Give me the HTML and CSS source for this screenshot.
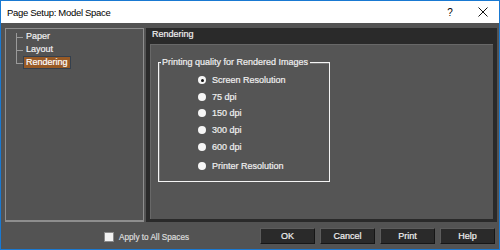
FILE: index.html
```html
<!DOCTYPE html>
<html lang="en">
<head>
  <meta charset="UTF-8" />
  <title>Page Setup: Model Space</title>
  <link rel="stylesheet" href="styles.css">
</head>
<body>
  <div class="window">
    <!-- Title bar -->
    <div class="titlebar">
      <span class="title">Page Setup: Model Space</span>
      <span class="tb-btn">?</span>
      <span class="tb-btn">
        <svg width="10" height="10" viewBox="0 0 10 10">
          <path d="M0.5 0.5 L9.5 9.5 M9.5 0.5 L0.5 9.5" stroke="#111" stroke-width="1" fill="none" />
        </svg>
      </span>
    </div>

    <div class="content">
      <div class="main">
        <!-- Left tree -->
        <div class="tree">
          <div class="tree-list">
            <div class="tree-item"><span>Paper</span></div>
            <div class="tree-item"><span>Layout</span></div>
            <div class="tree-item selected"><span>Rendering</span></div>
          </div>
        </div>

        <!-- Right page -->
        <div class="page">
          <div class="page-head">Rendering</div>
          <div class="page-inner">
            <div class="group">
              <div class="legend">Printing quality for Rendered Images</div>
              <div class="radio checked"><span class="dot"></span>Screen Resolution</div>
              <div class="radio"><span class="dot"></span>75 dpi</div>
              <div class="radio"><span class="dot"></span>150 dpi</div>
              <div class="radio"><span class="dot"></span>300 dpi</div>
              <div class="radio"><span class="dot"></span>600 dpi</div>
              <div class="radio last"><span class="dot"></span>Printer Resolution</div>
            </div>
          </div>
        </div>
      </div>

      <!-- Footer -->
      <div class="footer">
        <label class="check"><span class="box"></span>Apply to All Spaces</label>
        <div class="buttons">
          <button class="btn">OK</button>
          <button class="btn">Cancel</button>
          <button class="btn">Print</button>
          <button class="btn">Help</button>
        </div>
      </div>
    </div>
  </div>
</body>
</html>
```

FILE: styles.css
```css
body {
  margin: 0;
  font-family: "Liberation Sans", Arial, sans-serif;
  font-size: 9px;
  color: #f0f0f0;
}

.window {
  width: 500px;
  height: 250px;
  box-sizing: border-box;
  border: 1px solid #1979d2;
  background: #535353;
  display: flex;
  flex-direction: column;
}

/* Title bar */
.titlebar {
  height: 22px;
  flex: none;
  background: #fff;
  color: #000;
  display: flex;
  align-items: center;
  padding-left: 6px;
  padding-right: 1px;
  font-size: 9.5px;
  letter-spacing: -0.3px;
}

.title {
  flex: 1;
}

.tb-btn {
  width: 30px;
  margin-left: 3px;
  display: flex;
  justify-content: center;
  font-size: 10px;
}

/* Content area */
.content {
  flex: 1;
  display: flex;
  flex-direction: column;
  padding: 5px 2px 0 4px;
  min-height: 0;
  -webkit-text-stroke: 0.2px;
}

.main {
  height: 194px;
  display: flex;
  gap: 2px;
}

/* Tree */
.tree {
  width: 139px;
  box-sizing: border-box;
  border: 1px solid #8e8e8e;
  border-bottom-width: 2px;
  padding: 1px 0 0 0;
}

.tree-list {
  position: relative;
}

.tree-list::before {
  content: '';
  position: absolute;
  left: 10px;
  top: 3px;
  height: 31px;
  border-left: 1px solid #9a9a9a;
}

.tree-item {
  position: relative;
  height: 13px;
  line-height: 13px;
  padding-left: 17px;
}

.tree-item::before {
  content: '';
  position: absolute;
  left: 10px;
  top: 7px;
  width: 7px;
  border-top: 1px solid #9a9a9a;
}

.tree-item span {
  display: inline-block;
  padding: 0 2px;
  line-height: 11px;
  border: 1px solid transparent;
}

.tree-item.selected span {
  background: #985a25;
  border-color: #34404e;
  color: #fff;
}

/* Page */
.page {
  flex: 1;
  background: #2a2a2a;
  padding: 0 4px 3px 4px;
  display: flex;
  flex-direction: column;
}

.page-head {
  height: 16px;
  line-height: 12px;
  padding-left: 2px;
}

.page-inner {
  flex: 1;
  background: #555;
  border-top: 1px solid #686868;
  border-left: 1px solid #686868;
  padding: 17px 0 0 7px;
}

.group {
  position: relative;
  width: 172px;
  height: 120px;
  box-sizing: border-box;
  border: 1px solid #f4f4f4;
  box-shadow: inset 1px 1px 0 #777;
  padding: 9px 0 0 39px;
}

.legend {
  position: absolute;
  top: -6px;
  left: 2px;
  padding: 0 2px 0 1px;
  background: #555;
  line-height: 11px;
}

.radio {
  height: 16.6px;
  display: flex;
  align-items: center;
}

.radio.last {
  margin-top: 3px;
}

.dot {
  width: 8px;
  height: 8px;
  border-radius: 50%;
  background: #f6f6f6;
  margin-right: 6px;
  display: flex;
  align-items: center;
  justify-content: center;
}

.radio.checked .dot::after {
  content: '';
  width: 3px;
  height: 3px;
  border-radius: 50%;
  background: #111;
}

/* Footer */
.footer {
  flex: 1;
  display: flex;
  align-items: flex-start;
  padding-top: 6px;
}

.check {
  display: flex;
  align-items: center;
  margin-left: 99px;
  margin-top: 4px;
  color: #dcdcdc;
  font-size: 8.2px;
}

.box {
  width: 8px;
  height: 8px;
  background: #f2f2f2;
  border: 1px solid #8a8a8a;
  margin-right: 5px;
}

.buttons {
  margin-left: auto;
  margin-right: 2px;
  display: flex;
  gap: 5px;
}

.btn {
  width: 55px;
  height: 16px;
  padding: 0;
  background: #2a2a2a;
  border: 1px solid;
  border-color: #5c5c5c #161616 #161616 #5c5c5c;
  color: #f0f0f0;
  font-family: "Liberation Sans", Arial, sans-serif;
  font-size: 9px;
  -webkit-text-stroke: 0.2px;
}
```
